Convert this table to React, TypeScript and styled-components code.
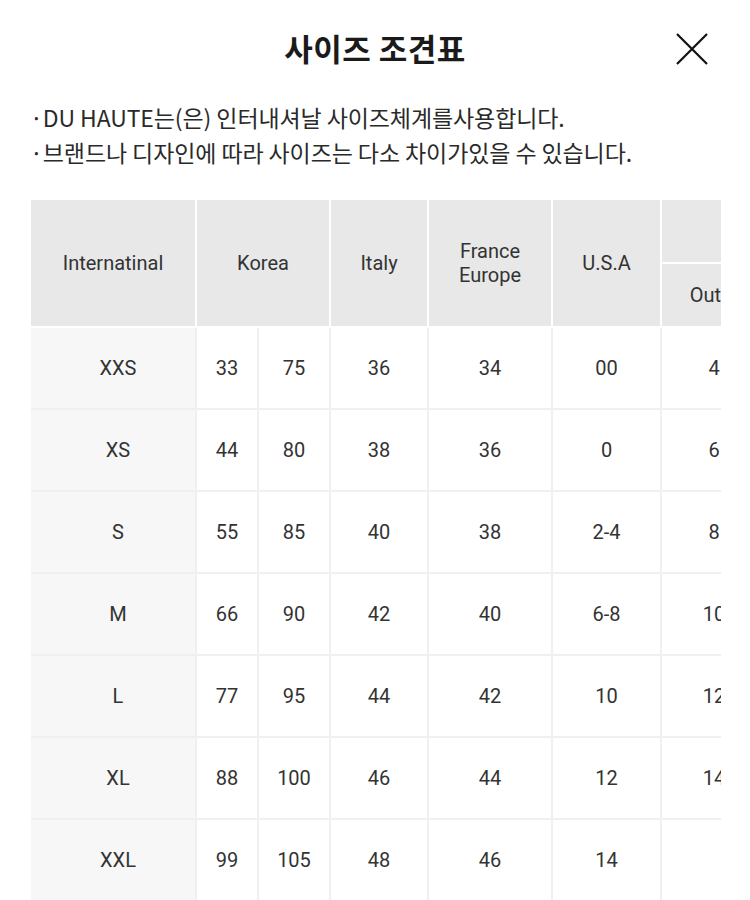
import React from "react";
import styled, { createGlobalStyle } from "styled-components";

const GlobalStyle = createGlobalStyle`
  html, body {
    margin: 0;
    padding: 0;
    background: #fff;
    height: 900px;
    overflow: hidden;
  }
  body {
    font-family: Roboto, "Noto Sans CJK KR", sans-serif;
    color: #222;
  }
`;

const Page = styled.div`
  width: 750px;
  height: 900px;
  overflow: hidden;
  display: flex;
  flex-direction: column;
`;

const Header = styled.div`
  height: 94px;
  display: flex;
  align-items: center;
  justify-content: center;
  position: relative;
`;

const Title = styled.h1`
  margin: 0;
  font-family: "Noto Sans CJK KR", sans-serif;
  font-size: 31px;
  font-weight: 700;
  color: #1a1a1a;
  letter-spacing: 0.5px;
`;

const CloseButton = styled.button`
  position: absolute;
  right: 40px;
  top: 31px;
  width: 36px;
  height: 36px;
  padding: 0;
  border: none;
  background: none;
  cursor: pointer;
`;

const Notes = styled.div`
  padding: 6px 30px 0;
  height: 106px;
  box-sizing: border-box;
`;

const Note = styled.p`
  margin: 0;
  font-family: "Noto Sans CJK KR", sans-serif;
  font-size: 23px;
  line-height: 35px;
  color: #2a2a2a;
  letter-spacing: -0.1px;
  white-space: nowrap;
`;

const TableWrap = styled.div`
  margin: 0 29px 0 31px;
  overflow: hidden;
  flex: 1;
`;

const Table = styled.table`
  border-collapse: separate;
  border-spacing: 0;
  table-layout: fixed;
  width: 843px;
  font-family: Roboto, sans-serif;
  font-size: 20px;
  color: #333;
`;

const Th = styled.th<{ $h?: number }>`
  background: #e8e8e8;
  font-weight: 400;
  border-right: 2px solid #fff;
  border-bottom: 2px solid #fff;
  line-height: 24px;
  padding: 0;
  text-align: center;
  height: ${(p) => (p.$h ? `${p.$h}px` : "auto")};
`;

const Td = styled.td<{ $label?: boolean }>`
  height: 80px;
  padding: 0 0 0 ${(p) => (p.$label ? "10px" : "0")};
  text-align: center;
  background: ${(p) => (p.$label ? "#f7f7f7" : "#fff")};
  border-right: 2px solid #f0f0f0;
  border-bottom: 2px solid #f0f0f0;
`;

const rows = [
  ["XXS", "33", "75", "36", "34", "00", "4", ""],
  ["XS", "44", "80", "38", "36", "0", "6", ""],
  ["S", "55", "85", "40", "38", "2-4", "8", ""],
  ["M", "66", "90", "42", "40", "6-8", "10", ""],
  ["L", "77", "95", "44", "42", "10", "12", ""],
  ["XL", "88", "100", "46", "44", "12", "14", ""],
  ["XXL", "99", "105", "48", "46", "14", "", ""],
];

const widths = [166, 62, 72, 98, 124, 109, 106, 106];

export default function App() {
  return (
    <Page>
      <GlobalStyle />
      <Header>
        <Title>사이즈 조견표</Title>
        <CloseButton aria-label="닫기">
          <svg width="36" height="36" viewBox="0 0 36 36">
            <path d="M3 3 L33 33 M33 3 L3 33" stroke="#111" strokeWidth="2.2" fill="none" />
          </svg>
        </CloseButton>
      </Header>
      <Notes>
        <Note>·DU HAUTE는(은) 인터내셔날 사이즈체계를사용합니다.</Note>
        <Note>·브랜드나 디자인에 따라 사이즈는 다소 차이가있을 수 있습니다.</Note>
      </Notes>
      <TableWrap>
        <Table>
          <colgroup>
            {widths.map((w, i) => (
              <col key={i} style={{ width: w }} />
            ))}
          </colgroup>
          <thead>
            <tr>
              <Th rowSpan={2}>Internatinal</Th>
              <Th colSpan={2} rowSpan={2}>Korea</Th>
              <Th rowSpan={2}>Italy</Th>
              <Th rowSpan={2}>
                France
                <br />
                Europe
              </Th>
              <Th rowSpan={2}>U.S.A</Th>
              <Th colSpan={2} $h={62}>U.K</Th>
            </tr>
            <tr>
              <Th $h={62}>Outer</Th>
              <Th $h={62}>Inner</Th>
            </tr>
          </thead>
          <tbody>
            {rows.map((r) => (
              <tr key={r[0]}>
                {r.map((c, i) => (
                  <Td key={i} $label={i === 0}>
                    {c}
                  </Td>
                ))}
              </tr>
            ))}
          </tbody>
        </Table>
      </TableWrap>
    </Page>
  );
}
